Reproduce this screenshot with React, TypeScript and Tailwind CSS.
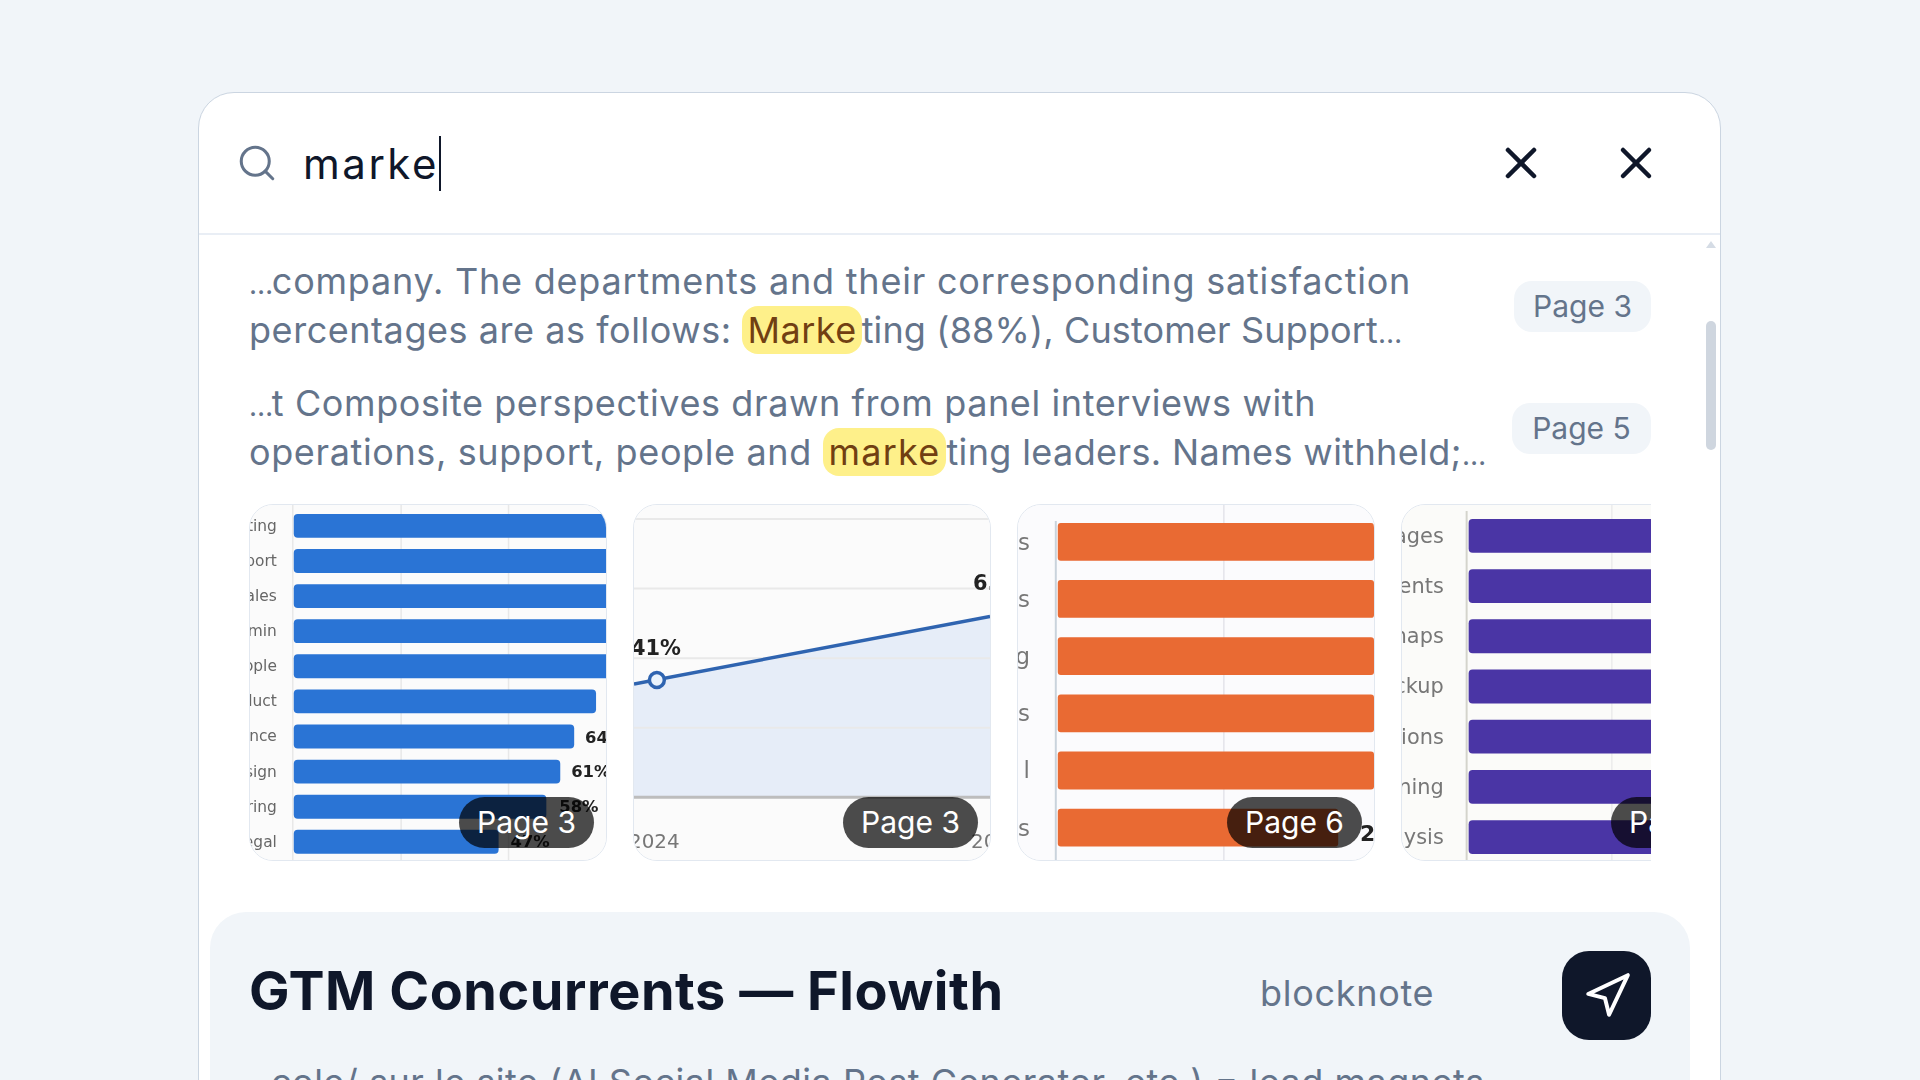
import type { ReactNode } from "react";
import { Navigation, Search, X } from "lucide-react";

const FONT = "font-['Inter','Noto_Sans',sans-serif]";

function Pill({ label }: { label: string }) {
  return (
    <div className="absolute right-[12px] bottom-[12px] flex h-[51px] w-[135px] items-center justify-center rounded-full bg-black/70 text-[30px] text-white">
      {label}
    </div>
  );
}

function Blue() {
  const labels = ["Marketing", "Support", "Sales", "Admin", "People", "Product", "Finance", "Design", "Hiring", "Legal"];
  const w = [320, 320, 320, 320, 320, 304, 282, 268, 254, 206];
  return (
    <svg viewBox="0 0 358 357" preserveAspectRatio="none" className="h-full w-full blur-[0.6px]">
      <rect width="358" height="358" fill="#fbfbfb" />
      <path d="M43 0V358M152 0V358M260 0V358" stroke="#e8e8e8" strokeWidth="1.5" />
      {labels.map((l, i) => (
        <g key={l}>
          <rect x="44" y={9 + i * 35.3} width={w[i]} height="24" rx="4" fill="#2a74d5" />
          <text x="27" y={26 + i * 35.3} textAnchor="end" fontFamily="DejaVu Sans" fontSize="15.5" fill="#666">{l}</text>
        </g>
      ))}
      <text x="337" y="239" fontFamily="DejaVu Sans" fontSize="16.5" fontWeight="700" fill="#222">64%</text>
      <text x="323" y="274" fontFamily="DejaVu Sans" fontSize="16.5" fontWeight="700" fill="#222">61%</text>
      <text x="311" y="309" fontFamily="DejaVu Sans" fontSize="16.5" fontWeight="700" fill="#222">58%</text>
      <text x="262" y="344" fontFamily="DejaVu Sans" fontSize="16.5" fontWeight="700" fill="#222">47%</text>
    </svg>
  );
}

function Line() {
  return (
    <svg viewBox="0 0 358 357" preserveAspectRatio="none" className="h-full w-full blur-[0.6px]">
      <rect width="358" height="358" fill="#fbfbfb" />
      <path d="M0 180L358 112V294H0Z" fill="#e6edf8" />
      <path d="M0 14H358M0 84H358M0 154H358M0 224H358" stroke="#e9e9e9" strokeWidth="2" />
      <path d="M0 294H358" stroke="#bdbdbd" strokeWidth="3" />
      <path d="M0 180L358 112" stroke="#2f64b0" strokeWidth="3.5" />
      <circle cx="23" cy="176" r="7.5" fill="#eaf3fc" stroke="#2f64b0" strokeWidth="3.5" />
      <text x="-3" y="151" fontFamily="DejaVu Sans" fontSize="21" fontWeight="700" fill="#222">41%</text>
      <text x="341" y="85" fontFamily="DejaVu Sans" fontSize="21" fontWeight="700" fill="#222">6.</text>
      <text x="-5" y="345" fontFamily="DejaVu Sans" fontSize="20" fill="#777">2024</text>
      <text x="339" y="345" fontFamily="DejaVu Sans" fontSize="20" fill="#777">20</text>
    </svg>
  );
}

function Orange() {
  const labels = ["s", "s", "g", "s", "l", "s"];
  return (
    <svg viewBox="0 0 358 357" preserveAspectRatio="none" className="h-full w-full blur-[0.6px]">
      <rect width="358" height="358" fill="#fbfbfd" />
      <path d="M207 0V358" stroke="#e4e4ea" strokeWidth="1.5" />
      <path d="M38 16V358" stroke="#c9d3dc" strokeWidth="2" />
      {labels.map((l, i) => (
        <g key={i}>
          <rect x="40" y={18 + i * 57.5} width={i === 5 ? 282 : 318} height="38" rx="3" fill="#e96a33" />
          <text x="12" y={45 + i * 57.5} textAnchor="end" fontFamily="DejaVu Sans" fontSize="23" fill="#777">{l}</text>
        </g>
      ))}
      <text x="344" y="338" fontFamily="DejaVu Sans" fontSize="22" fontWeight="700" fill="#222">2</text>
    </svg>
  );
}

function Purple() {
  const labels = ["Images", "Agents", "Heatmaps", "Mockup", "Variations", "Planning", "Analysis"];
  return (
    <svg viewBox="0 0 358 357" preserveAspectRatio="none" className="h-full w-full blur-[0.6px]">
      <rect width="358" height="358" fill="#fbfbf9" />
      <path d="M211 0V358" stroke="#ececec" strokeWidth="1.5" />
      <path d="M65 6V358" stroke="#d4d4cc" strokeWidth="2" />
      {labels.map((l, i) => (
        <g key={l}>
          <rect x="67" y={14 + i * 50.5} width="291" height="34" rx="4" fill="#4a35a5" />
          <text x="42" y={38 + i * 50.5} textAnchor="end" fontFamily="DejaVu Sans" fontSize="21" fill="#777">{l}</text>
        </g>
      ))}
    </svg>
  );
}

function Thumb({ label, children }: { label: string; children: ReactNode }) {
  return (
    <div className="relative h-[357px] w-[358px] shrink-0 overflow-hidden rounded-[24px] border border-[#e2e8f0]">
      {children}
      <Pill label={label} />
    </div>
  );
}

function Dots() {
  return <span className="text-[28px] leading-[0] tracking-[-1.4px]">…</span>;
}

function Mark({ children, className }: { children: ReactNode; className: string }) {
  return <mark className={`rounded-[16px] bg-[#fef08a] py-[2px] text-[#713f12] ${className}`}>{children}</mark>;
}

function Result({ children, page, badge }: { children: ReactNode; page: string; badge: string }) {
  return (
    <div className="flex items-center justify-between">
      <p className="w-[1262px] whitespace-nowrap text-[36px] leading-[49px] text-[#64748b]">{children}</p>
      <span className={`flex h-[51px] items-center justify-center rounded-[18px] bg-[#f1f5f9] text-[30px] text-[#64748b] ${badge}`}>{page}</span>
    </div>
  );
}

export default function App() {
  return (
    <div className={`h-[1080px] overflow-hidden bg-[#f1f5f9] pt-[92px] ${FONT}`}>
      <div className="ml-[198px] h-[1100px] w-[1523px] overflow-hidden rounded-t-[36px] border border-[#cbd5e1] bg-white">
        <div className="flex h-[142px] items-center border-b-2 border-[#e9eef5] pl-[37px] pr-[58px]">
          <Search className="size-[42px] text-[#64748b]" strokeWidth={1.75} />
          <div className="ml-[25px] flex-1 text-[42px] tracking-[2.5px] text-[#0f172a]">
            <span className="border-r-2 border-[#0f172a] py-[2px]">marke</span>
          </div>
          <X className="size-[52px] text-[#0f172a]" strokeWidth={2.1} />
          <X className="ml-[63px] size-[52px] text-[#0f172a]" strokeWidth={2.1} />
        </div>
        <div className="relative pl-[50px] pt-[22px]">
          <div className="w-[1402px]">
            <Result page="Page 3" badge="w-[137px]">
              <span className="tracking-[0.78px]"><Dots />company. The departments and their corresponding satisfaction</span>
              <br />
              <span className="tracking-[0.55px]">percentages are as follows: </span>
              <Mark className="px-[5px] tracking-[0.5px]">Marke</Mark>
              <span className="tracking-[0.14px]">ting (88%), Customer Support<Dots /></span>
            </Result>
            <div className="mt-[24px]">
              <Result page="Page 5" badge="w-[139px]">
                <span className="tracking-[0.6px]"><Dots />t Composite perspectives drawn from panel interviews with</span>
                <br />
                <span className="tracking-[0.62px]">operations, support, people and </span>
                <Mark className="px-[6px] tracking-[1.2px]">marke</Mark>
                <span className="tracking-[0.38px]">ting leaders. Names withheld;<Dots /></span>
              </Result>
            </div>
            <div className="mt-[27px] flex gap-[26px] overflow-hidden">
              <Thumb label="Page 3"><Blue /></Thumb>
              <Thumb label="Page 3"><Line /></Thumb>
              <Thumb label="Page 6"><Orange /></Thumb>
              <Thumb label="Page 3"><Purple /></Thumb>
            </div>
          </div>
          <div className="absolute right-[4px] top-[6px] flex w-[10px] flex-col items-center">
            <div className="h-0 w-0 border-x-[5px] border-b-[7px] border-x-transparent border-b-[#d5dce5]" />
            <div className="mt-[73px] h-[129px] w-[10px] rounded-full bg-[#cfd6df]" />
          </div>
        </div>
        <div className="mx-[11px] mt-[51px] h-[300px] w-[1480px] rounded-[36px] bg-[#f1f5f9] pl-[39px] pr-[38px] pt-[39px]">
          <div className="flex items-center">
            <h2 className="mb-[9px] w-[1011px] text-[54px] font-bold leading-[60px] tracking-[0.55px] text-[#0f172a]">GTM Concurrents — Flowith</h2>
            <span className="mb-[6px] w-[302px] text-[36px] tracking-[0.7px] text-[#64748b]">blocknote</span>
            <button className="flex size-[89px] items-center justify-center rounded-[27px] bg-[#0f172a]">
              <Navigation className="size-[50px] text-white" strokeWidth={1.9} />
            </button>
          </div>
          <p className="mt-[15px] whitespace-nowrap pl-[22px] text-[36px] tracking-[0.5px] text-[#64748b]">cole/ sur le site (AI Social Media Post Generator, etc.) = lead magnets</p>
        </div>
      </div>
    </div>
  );
}
